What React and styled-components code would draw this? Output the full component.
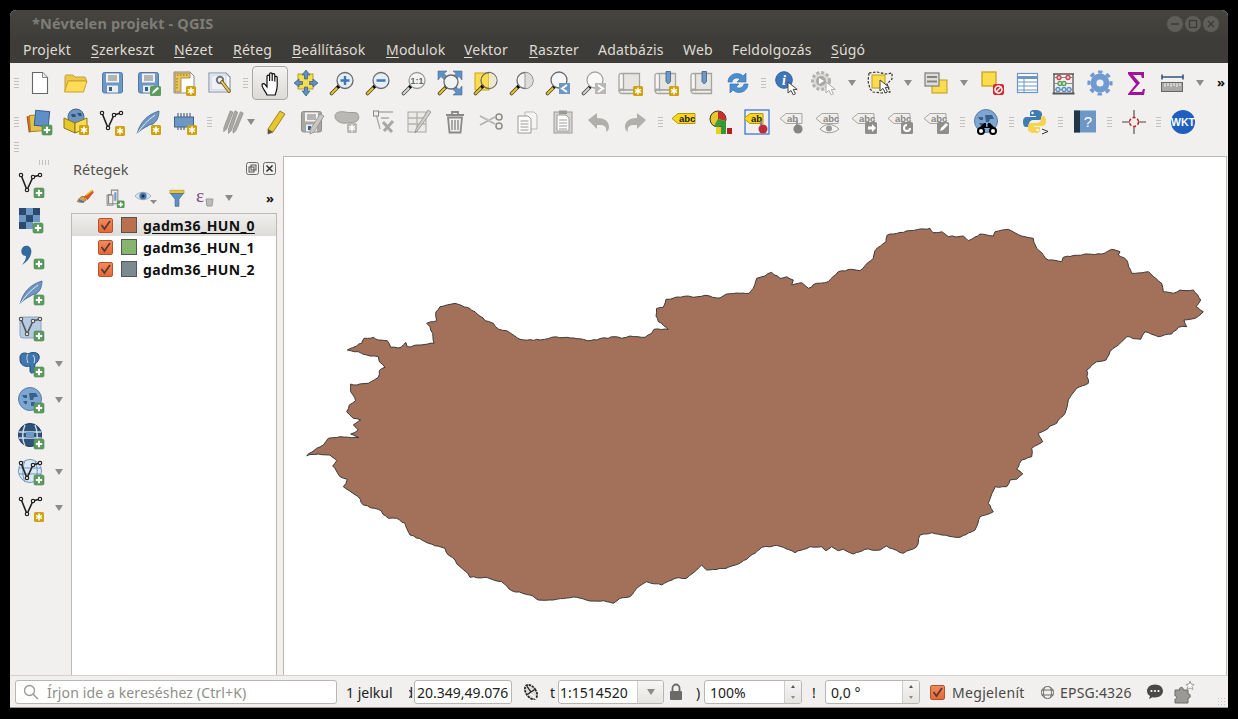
import styled, { createGlobalStyle } from 'styled-components';

const GlobalStyle = createGlobalStyle`
  html, body { margin: 0; padding: 0; background: #000; }
  body { font-family: "Noto Sans", "Open Sans", sans-serif; overflow: hidden; }
`;

const Desktop = styled.div`
  width: 1238px;
  height: 719px;
  padding: 10px 10px 11px;
  box-sizing: border-box;
  background: #000;
`;

const Window = styled.div`
  display: flex;
  flex-direction: column;
  height: 100%;
  background: #f1f0ee;
  border-radius: 6px 6px 0 0;
  overflow: hidden;
`;

const TitleBar = styled.div`
  display: flex;
  align-items: center;
  height: 27px;
  box-sizing: border-box;
  padding: 1px 10px 0 22px;
  background: linear-gradient(#45443f, #3f3e3a);
  color: #7f7d77;
  font-size: 14.5px;
  font-weight: 700;
`;

const TitleText = styled.div`
  flex: 1;
  margin-top: -3px;
  letter-spacing: 0.15px;
`;

const WinButtons = styled.div`
  display: flex;
  gap: 2px;
  margin-right: -1px;
`;

const WinButton = styled.div`
  width: 16px;
  height: 16px;
  border-radius: 50%;
  background: #5f5e59;
  display: flex;
  align-items: center;
  justify-content: center;
`;

const MenuBar = styled.div`
  display: flex;
  align-items: center;
  height: 26px;
  box-sizing: border-box;
  padding: 0 0 1px 13px;
  background: #3d3c38;
  color: #dfdbd2;
  font-size: 14px;
  letter-spacing: 0.2px;
`;

const MenuItem = styled.div`
  width: ${(p) => p.$w}px;
  flex: none;
  white-space: nowrap;
  u { text-underline-offset: 2px; }
`;

const Toolbars = styled.div`
  height: 92px;
  box-sizing: border-box;
  flex: none;
`;

const Toolbar = styled.div`
  display: flex;
  align-items: center;
  height: ${(p) => p.$h}px;
`;

const GripBox = styled.div`
  width: ${(p) => p.$w || 14}px;
  flex: none;
  display: flex;
  flex-direction: column;
  align-items: center;
  gap: 2px;
`;

const GripLine = styled.i`
  display: block;
  width: 5px;
  height: 1px;
  background: #c4c2bd;
`;

const Tool = styled.div`
  width: ${(p) => p.$w || 36}px;
  height: 34px;
  flex: none;
  box-sizing: border-box;
  display: flex;
  align-items: center;
  justify-content: ${(p) => (p.$w ? 'flex-start' : 'center')};
  padding-left: ${(p) => (p.$w ? 4 : 0)}px;
  border: 1px solid ${(p) => (p.$active ? '#a9a7a1' : 'transparent')};
  border-radius: 4px;
  background: ${(p) => (p.$active ? 'linear-gradient(#f3f2f1, #dcdad6)' : 'transparent')};
`;

const Drop = styled.div`
  width: 20px;
  flex: none;
  display: flex;
  justify-content: center;
`;

const Arrow = styled.i`
  display: block;
  width: 0;
  height: 0;
  border-left: 4.5px solid transparent;
  border-right: 4.5px solid transparent;
  border-top: 6px solid #8c8b87;
`;

const More = styled.div`
  flex: none;
  width: 22px;
  text-align: center;
  color: #111;
  font-size: 13px;
  font-weight: 700;
  line-height: 1;
`;

const Main = styled.div`
  flex: 1;
  min-height: 0;
  display: flex;
`;

const Dock = styled.div`
  width: 61px;
  flex: none;
  box-sizing: border-box;
  padding: 5px 0 0 3px;
`;

const DockGrip = styled.div`
  display: flex;
  justify-content: center;
  gap: 2px;
  height: 6px;
  margin-left: 13px;
  width: 36px;
`;

const DockDot = styled.i`
  display: block;
  width: 1px;
  height: 5px;
  background: #c4c2bd;
`;

const DockRow = styled.div`
  display: flex;
  align-items: center;
  height: 36px;
`;

const Panel = styled.div`
  width: 212px;
  flex: none;
  display: flex;
  flex-direction: column;
`;

const PanelHead = styled.div`
  display: flex;
  align-items: center;
  height: 28px;
  box-sizing: border-box;
  padding: 0 3px 1px 2px;
  color: #55534f;
  font-size: 14.5px;
`;

const PanelTitle = styled.div`
  flex: 1;
`;

const PanelBtns = styled.div`
  display: flex;
  gap: 4px;
  margin-right: 4px;
`;

const PanelTools = styled.div`
  display: flex;
  align-items: center;
  height: 30px;
  padding-left: 1px;
`;

const PanelTool = styled.div`
  width: ${(p) => p.$w}px;
  flex: none;
  display: flex;
  align-items: center;
  justify-content: center;
`;

const Tree = styled.div`
  flex: 1;
  width: 206px;
  box-sizing: border-box;
  background: #fff;
  border: 1px solid #bcbab5;
  border-bottom: 0;
`;

const LayerRow = styled.div`
  display: flex;
  align-items: center;
  height: 22px;
  padding-left: 26px;
  background: ${(p) => (p.$selected ? 'linear-gradient(#f0efed, #dedcd9)' : '#fff')};
  color: #111;
  font-size: 14px;
  font-weight: 700;
  text-decoration: ${(p) => (p.$selected ? 'underline' : 'none')};
  text-underline-offset: 2px;
`;

const Check = styled.div`
  width: 15px;
  height: 15px;
  flex: none;
  box-sizing: border-box;
  border: 1px solid #b4532a;
  border-radius: 2px;
  background: linear-gradient(#f28a5c, #e5683a);
  display: flex;
  align-items: center;
  justify-content: center;
`;

const Swatch = styled.div`
  width: 16px;
  height: 16px;
  flex: none;
  box-sizing: border-box;
  margin: 0 6px 0 8px;
  background: ${(p) => p.$color};
  border: 1px solid #555;
`;

const LayerName = styled.span`
  letter-spacing: 0.33px;
`;

const Canvas = styled.div`
  flex: 1;
  min-width: 0;
  box-sizing: border-box;
  margin: 1px 1px 0 0;
  background: #fff;
  border: 1px solid #bcbab5;
  border-bottom: 0;
`;

const MapSvg = styled.svg`
  display: block;
  width: 100%;
  height: 100%;
`;

const StatusBar = styled.div`
  height: 33px;
  flex: none;
  box-sizing: border-box;
  display: flex;
  align-items: center;
  padding: 1px 0 0 5px;
  border-top: 1px solid #d4d2cd;
  border-bottom: 1px solid #9d9b97;
  color: #333;
  font-size: 14px;
`;

const Search = styled.div`
  width: 322px;
  height: 24px;
  flex: none;
  box-sizing: border-box;
  display: flex;
  align-items: center;
  gap: 8px;
  padding-left: 7px;
  background: #fff;
  border: 1px solid #b8b6b1;
  border-radius: 3px;
  color: #8f8e8a;
  letter-spacing: 0.13px;
`;

const Clip = styled.div`
  width: ${(p) => p.$w}px;
  margin-left: ${(p) => p.$ml || 0}px;
  flex: none;
  display: flex;
  justify-content: ${(p) => (p.$end ? 'flex-end' : 'flex-start')};
  overflow: hidden;
  white-space: nowrap;
  color: #222;
`;

const Field = styled.div`
  width: ${(p) => p.$w}px;
  margin-left: ${(p) => p.$ml || 0}px;
  height: 24px;
  flex: none;
  box-sizing: border-box;
  display: flex;
  align-items: center;
  background: #fff;
  border: 1px solid #b8b6b1;
  border-radius: 3px;
  color: #222;
  overflow: hidden;
`;

const FieldText = styled.div`
  flex: 1;
  padding-left: ${(p) => p.$pad ?? 4}px;
  white-space: nowrap;
  overflow: hidden;
`;

const ComboButton = styled.div`
  width: 25px;
  height: 100%;
  flex: none;
  display: flex;
  align-items: center;
  justify-content: center;
  border-left: 1px solid #cfcdc9;
  background: linear-gradient(#f7f6f5, #e6e4e1);
`;

const Spin = styled.div`
  width: 16px;
  height: 100%;
  flex: none;
  display: flex;
  flex-direction: column;
  align-items: center;
  justify-content: space-around;
  border-left: 1px solid #cfcdc9;
  background: linear-gradient(#f7f6f5, #e6e4e1);
`;

const SpinUp = styled.i`
  width: 0;
  height: 0;
  border-left: 2.5px solid transparent;
  border-right: 2.5px solid transparent;
  border-bottom: 3px solid #555;
`;

const SpinDown = styled(SpinUp)`
  border-bottom: 0;
  border-top: 3px solid #8c8b87;
`;

const StatusIcon = styled.div`
  flex: none;
  display: flex;
  margin-left: ${(p) => p.$ml || 0}px;
`;

const RenderLabel = styled.div`
  margin-left: 7px;
  width: 88px;
  flex: none;
  color: #4a4946;
  white-space: nowrap;
  letter-spacing: 0.32px;
`;

const Epsg = styled.div`
  width: 92px;
  margin-left: 5px;
  flex: none;
  color: #4a4946;
  white-space: nowrap;
  letter-spacing: 0.2px;
`;

const Resize = styled.div`
  margin-left: auto;
  margin-right: 1px;
  align-self: flex-end;
  width: 10px;
  height: 10px;
  background-image: radial-gradient(#c8c6c1 1px, transparent 1px);
  background-size: 3px 3px;
`;

// icon helpers, all drawn on a 28x28 grid
const Ico = ({ s = 28, children }) => (
  <svg width={s} height={s} viewBox="0 0 28 28" style={{ display: 'block' }}>
    {children}
  </svg>
);

const StarBadge = ({ x = 17, y = 17, grey }) => (
  <g transform={`translate(${x} ${y})`}>
    <rect width="10" height="10" rx="1.5" fill={grey ? '#b9b8b5' : '#cfa308'} />
    <path d="M5 1.6v6.8M2 3.3l6 3.4M2 6.7l6-3.4" stroke="#fff" strokeWidth="1.5" />
  </g>
);

const PlusBadge = ({ x = 17, y = 17 }) => (
  <g transform={`translate(${x} ${y})`}>
    <rect width="10" height="10" rx="1.5" fill="#5c9b5e" stroke="#4a8a50" strokeWidth=".6" />
    <path d="M5 1.8v6.4M1.8 5h6.4" stroke="#fff" strokeWidth="2.1" />
  </g>
);

const Cursor = ({ x = 14, y = 12, grey }) => (
  <path
    transform={`translate(${x} ${y})`}
    d="M0 0v11l3-2.6 2.2 4.4 2.2-1-2.2-4.4h4z"
    fill="#fff"
    stroke={grey ? '#aaa' : '#444'}
    strokeWidth="1"
  />
);

const VShape = ({ stroke = '#222', dx = 0, dy = 0 }) => (
  <g transform={`translate(${dx} ${dy})`} fill="#fff" stroke={stroke} strokeWidth="1.2">
    <path d="M4 5l6 15 6-13 7-2" fill="none" strokeWidth="1.6" />
    <circle cx="4" cy="5" r="1.7" />
    <circle cx="10" cy="20" r="1.7" />
    <circle cx="16" cy="7" r="1.7" />
    <circle cx="23" cy="5" r="1.7" />
  </g>
);

const Feather = () => (
  <g>
    <path d="M3 26C6 15 12 7 25 3c0 7-3 11-6 13l-4 1c-2 2-7 3-12 9z" fill="#6f96c2" stroke="#3f658f" strokeWidth=".8" />
    <path d="M3 26C8 18 14 12 21 7" stroke="#dfe9f3" strokeWidth="1" fill="none" />
  </g>
);

const Floppy = ({ fill = '#6d97c4', line = '#4f7aa8' }) => (
  <g>
    <rect x="4.5" y="3.5" width="20" height="20.5" rx="2" fill={fill} stroke={line} />
    <rect x="8" y="4.5" width="13" height="9" fill="#f2f2f0" />
    <path d="M10 7h9M10 9h9M10 11h9" stroke="#777" strokeWidth="1" />
    <rect x="9" y="16.5" width="11" height="7" fill="#e9eef3" />
    <rect x="11" y="18" width="3" height="4" fill="#3a5f87" />
  </g>
);

const Lens = ({ cx = 17, cy = 11.5, r = 8, fill = '#eef1f4', stroke = '#6a6a6a', handle = '#e5c21a', children }) => (
  <g>
    <path d="M10.5 17.5l-7 7" stroke="#444" strokeWidth="3.6" strokeLinecap="round" />
    <path d="M8.6 19.4l-5 5" stroke={handle} strokeWidth="2.1" strokeLinecap="round" />
    <path d="M11.500 16.500l-2 2" stroke="#000" strokeWidth="3" />
    <circle cx={cx} cy={cy} r={r} fill={fill} stroke={stroke} strokeWidth="1.3" />
    {children}
  </g>
);

const Scroll = () => (
  <g stroke="#a5a4a0" strokeWidth="1.3">
    <path d="M7 4.500h16.500V21H7z" fill="#e6e5e2" />
    <path d="M3 21.500c0 2 1.500 3 3.500 3h17V21H7z" fill="#efeeec" />
    <path d="M3 21.500V6.500c0-2.800 4.500-2.800 4.500 0V21c-1-1.500-4-1-4.500.5z" fill="#f6f5f3" />
  </g>
);

const Mark = () => <path d="M14 2.500h4.500v10l-2.250 2.500-2.250-2.500z" fill="#6d97c4" stroke="#3a5f87" strokeWidth=".8" />;

const Tag = ({ grey, text = 'abc', dx = 0, w = 22 }) => (
  <g transform={`translate(${dx} 0)`}>
    <path
      d={`M1 10.5l6-5h${w - 6}v10H7z`}
      fill={grey ? '#efeeec' : '#f7d716'}
      stroke={grey ? '#a8a7a4' : '#b6960a'}
    />
    <text x={8} y={14} fontFamily="Liberation Sans, sans-serif" fontSize="9.5" fontWeight="700" fill={grey ? '#8a8986' : '#222'}>
      {text}
    </text>
  </g>
);

const Pencil = ({ fill = '#e9c62e', line = '#8f7a1c' }) => (
  <g>
    <path d="M19 3l5 3-12 18-5 2 0-5z" fill={fill} stroke={line} strokeWidth=".9" />
    <path d="M7 21l5 3-5 2z" fill="#555" />
  </g>
);

const Globe = ({ fill = '#7fa6d0', dark = '#38608c' }) => (
  <g>
    <circle cx="13" cy="13" r="11.5" fill={fill} stroke="#5a7fa8" />
    <path d="M5 9h5v3H7zM12 7h7l2 4h-4l-1 3h-3zM6 15h4v3H8zM14 16h4l-1 4h-3z" fill={dark} />
  </g>
);

// toolbar icons
const NewIcon = () => <Ico><path d="M6.5 3.5h10l5 5v16h-15z" fill="#fff" stroke="#666" strokeWidth="1.1" /><path d="M16.5 3.5v5h5" fill="#eee" stroke="#888" /></Ico>;
const OpenIcon = () => (
  <Ico>
    <path d="M3 7.5C3 6 4 6 5 6h6l2 2h9c1 0 2 .5 2 2v2H6l-3 10z" fill="#eec64c" stroke="#c7a232" />
    <path d="M6 12h19l-3.5 11H2.5z" fill="#fedc55" stroke="#c7a232" />
  </Ico>
);
const SaveIcon = () => <Ico><Floppy /></Ico>;
const SaveAsIcon = () => (
  <Ico>
    <Floppy />
    <rect x="16" y="17" width="11" height="10" rx="1.5" fill="#5c9b5e" />
    <path d="M18 25l1-3 4.5-4 1.5 1.5-4.5 4z" fill="#fff" />
  </Ico>
);
const LayoutNewIcon = () => (
  <Ico>
    <path d="M4 3h16l4 4v17H4z" fill="#fff" stroke="#888" />
    <path d="M5 4h15v5h-9v14H5z" fill="#e9c45e" stroke="#9c7f2a" strokeWidth=".8" />
    <path d="M7 6h11M7 9v11" stroke="#87691d" strokeWidth="1" strokeDasharray="1.5 1.5" />
    <StarBadge x={16} y={17} />
  </Ico>
);
const LayoutMgrIcon = () => (
  <Ico>
    <path d="M3 4h17l4 4v15H3z" fill="#fff" stroke="#7f8ea8" strokeWidth="1.1" />
    <rect x="5" y="6" width="15" height="15" fill="#eef1f8" stroke="#c4cbdd" />
    <circle cx="14" cy="11" r="3.2" fill="none" stroke="#777" strokeWidth="2" />
    <path d="M16 13l7 9" stroke="#6d5a20" strokeWidth="3.6" strokeLinecap="round" />
    <path d="M16 13l7 9" stroke="#e8c85a" strokeWidth="2" strokeLinecap="round" />
  </Ico>
);
const HandIcon = () => (
  <Ico>
    <path d="M11 26c-1-3-5-7-5-10 0-1.6 2-1.8 3-.6l2 2.6V7.5c0-1.8 2.6-1.8 2.6 0V12 5.2c0-1.8 2.6-1.8 2.6 0V12 6c0-1.8 2.6-1.8 2.6 0v6.5-4c0-1.6 2.4-1.6 2.4 0V17c0 3-1 5-2 9z" fill="#fff" stroke="#111" strokeWidth="1.2" />
  </Ico>
);
const PanSelIcon = () => (
  <Ico>
    <rect x="6" y="5" width="15" height="15" fill="#fbdc4e" stroke="#b99c1e" />
    <g fill="#5f90c2" stroke="#2f5c8c" strokeWidth=".7">
      <path d="M14 1l4 5h-2.5v4h-3V6H10z" />
      <path d="M14 27l4-5h-2.5v-4h-3v4H10z" />
      <path d="M2 14l5-4v2.5h3.5v3H7V18z" />
      <path d="M26 14l-5-4v2.5h-3.5v3H21V18z" />
    </g>
  </Ico>
);
const ZoomInIcon = () => <Ico><Lens fill="#e5edf5"><path d="M17 7v9M12.5 11.5h9" stroke="#3f76b8" strokeWidth="2.4" /></Lens></Ico>;
const ZoomOutIcon = () => <Ico><Lens fill="#e5edf5"><path d="M12.5 11.5h9" stroke="#3f76b8" strokeWidth="2.4" /></Lens></Ico>;
const ZoomOneIcon = () => (
  <Ico>
    <Lens fill="#f4f4f2" stroke="#9a9a98" handle="#d8d6d0">
      <text x="17" y="15" textAnchor="middle" fontFamily="Liberation Sans, sans-serif" fontSize="9" fontWeight="700" fill="#666">1:1</text>
    </Lens>
  </Ico>
);
const ZoomFullIcon = () => (
  <Ico>
    <g fill="#5f90c2" stroke="#44709f" strokeWidth=".6">
      <path d="M2 2h9l-3 2.5 3 3-3 3-3-3L2 11z" />
      <path d="M26 2h-9l3 2.5-3 3 3 3 3-3 3 3.5z" />
      <path d="M26 26h-9l3-2.5-3-3 3-3 3 3 3-3.5z" />
    </g>
    <Lens cx={15} cy={13} r={7} fill="#f1f2f2" />
  </Ico>
);
const ZoomSelIcon = () => (
  <Ico>
    <rect x="3" y="4" width="14" height="17" fill="#fbdc4e" stroke="#c7a81e" />
    <Lens fill="none">
      <path d="M17 4a7.5 7.5 0 0 1 0 15z" fill="#ece9cf" />
    </Lens>
  </Ico>
);
const ZoomLayerIcon = () => (
  <Ico>
    <Lens fill="#f3f3f1">
      <path d="M17 3.5a8 8 0 0 1 0 16z" fill="#dcdcda" />
      <path d="M17 3.5v16" stroke="#9a9a98" />
    </Lens>
  </Ico>
);
const ZoomLastIcon = () => (
  <Ico>
    <Lens cx={15} cy={11} fill="#f4f6f8" />
    <rect x="15" y="14" width="11" height="11" fill="#6d97c4" />
    <path d="M23 16l-5 3.5 5 3.5" fill="none" stroke="#fff" strokeWidth="2" />
  </Ico>
);
const ZoomNextIcon = () => (
  <Ico>
    <Lens cx={15} cy={11} fill="#f8f8f7" stroke="#a5a5a3" handle="#d0cfca" />
    <rect x="15" y="14" width="11" height="11" fill="#b7b7b5" />
    <path d="M18 16l5 3.5-5 3.5" fill="none" stroke="#fff" strokeWidth="2" />
  </Ico>
);
const SheetNewIcon = () => <Ico><Scroll /><StarBadge /></Ico>;
const SheetMarkIcon = () => <Ico><Scroll /><Mark /><StarBadge /></Ico>;
const SheetShowIcon = () => <Ico><Scroll /><Mark /></Ico>;
const RefreshIcon = () => (
  <Ico>
    <g fill="#4a90d0" stroke="#2f6aa8" strokeWidth=".6">
      <path d="M4 13C4 7 10 3 16 5c1 .3 2 1 3 2l3-3v9h-9l3-3c-3-2-7-1-8 3z" />
      <path d="M24 15c0 6-6 10-12 8-1-.3-2-1-3-2l-3 3v-9h9l-3 3c3 2 7 1 8-3z" />
    </g>
  </Ico>
);
const IdentifyIcon = () => (
  <Ico>
    <circle cx="10" cy="11" r="8.3" fill="#3f76b8" stroke="#2f5f9c" />
    <text x="10" y="16" textAnchor="middle" fontFamily="Liberation Serif, serif" fontSize="14" fontWeight="700" fontStyle="italic" fill="#fff">i</text>
    <Cursor x={14} y={13} />
  </Ico>
);
const ActionIcon = () => (
  <Ico>
    <circle cx="11" cy="12" r="8.5" fill="#dcdbd8" stroke="#b2b1ae" strokeWidth="3" strokeDasharray="3 2" />
    <circle cx="11" cy="12" r="5" fill="#aaa9a6" />
    <path d="M9 9v6l5-3z" fill="#fff" />
    <Cursor x={16} y={13} grey />
  </Ico>
);
const SelectIcon = () => (
  <Ico>
    <rect x="6" y="6" width="13" height="13" fill="#fbdc4e" stroke="#b99c1e" />
    <path d="M3 4l8-1 9 2 6-1 0 6-5 5 3 8-8 1-9-1-3-3-2-8z" fill="none" stroke="#333" strokeWidth="1.2" strokeDasharray="2.5 1.5" />
    <Cursor x={14} y={11} />
  </Ico>
);
const AttrSelIcon = () => (
  <Ico>
    <rect x="10" y="11" width="15" height="13" fill="#fbdc4e" stroke="#b99c1e" />
    <rect x="3" y="4" width="14" height="13" fill="#dedddb" stroke="#85847f" strokeWidth="1.3" />
    <path d="M5 8h10M5 12.5h10" stroke="#85847f" strokeWidth="1.8" />
  </Ico>
);
const DeselectIcon = () => (
  <Ico>
    <rect x="4" y="3" width="14" height="14" fill="#fbdc4e" stroke="#c2a520" strokeWidth="1.3" />
    <rect x="15" y="15" width="11" height="11" rx="2" fill="#d8262c" />
    <circle cx="20.5" cy="20.5" r="3.5" fill="none" stroke="#fff" strokeWidth="1.5" />
    <path d="M18 23l5-5" stroke="#fff" strokeWidth="1.5" />
  </Ico>
);
const TableIcon = () => (
  <Ico>
    <rect x="3.5" y="4.5" width="20" height="19" fill="#fff" stroke="#6d97c4" strokeWidth="1.2" />
    <path d="M4 8.5h19" stroke="#6d97c4" strokeWidth="3" />
    <path d="M10 9v14M4 13h19M4 17h19M4 21h19" stroke="#6d97c4" strokeWidth="1" />
  </Ico>
);
const AbacusIcon = () => (
  <Ico>
    <path d="M4 5v19M23 5v19M3 5h21" stroke="#555" strokeWidth="1.3" fill="none" />
    <path d="M2.5 24.5h22" stroke="#555" strokeWidth="2" />
    <path d="M4 8.5h19M4 14.5h19M4 20.5h19" stroke="#888" />
    <g fill="none" strokeWidth="1.3">
      <circle cx="9" cy="8.5" r="2" stroke="#c9434b" fill="#f3c9cb" /><circle cx="18" cy="8.5" r="2" stroke="#c9434b" fill="#f3c9cb" />
      <circle cx="10" cy="14.5" r="2" stroke="#5aa15a" fill="#cfe6cf" /><circle cx="14" cy="14.5" r="2" stroke="#5aa15a" fill="#cfe6cf" />
      <circle cx="8" cy="20.5" r="2" stroke="#5f90c2" fill="#cfe0f1" /><circle cx="14" cy="20.5" r="2" stroke="#5f90c2" fill="#cfe0f1" /><circle cx="19" cy="20.5" r="2" stroke="#5f90c2" fill="#cfe0f1" />
    </g>
  </Ico>
);
const GearIcon = () => (
  <Ico>
    <circle cx="14" cy="14" r="9.5" fill="#6f9bd0" />
    <circle cx="14" cy="14" r="11" fill="none" stroke="#6f9bd0" strokeWidth="3.2" strokeDasharray="4.4 4.2" strokeDashoffset="2" />
    <circle cx="14" cy="14" r="3.6" fill="#f1f0ee" />
  </Ico>
);
const SigmaIcon = () => <Ico><path d="M6 3h16v6h-2l-1-3H11l7 8-8 9h10l1-3h2l-1 6H6v-1l8-10-8-10z" fill="#a0149c" /></Ico>;
const RulerIcon = () => (
  <Ico>
    <path d="M4 8h21M4 5.5v5M25 5.5v5" stroke="#35557a" strokeWidth="1.6" />
    <rect x="3.5" y="13.5" width="21" height="9" fill="#a9a8a5" stroke="#666" />
    <path d="M7 14v4M10 14v3M13 14v4M16 14v3M19 14v4M22 14v3" stroke="#fff" strokeWidth=".9" />
  </Ico>
);
const AddLayersIcon = () => (
  <Ico>
    <rect x="2" y="8" width="14" height="15" transform="rotate(-8 9 15)" fill="#d96c33" stroke="#a64c1f" />
    <rect x="4" y="7" width="15" height="16" transform="rotate(-4 11 15)" fill="#e8c24a" stroke="#ab8c21" />
    <rect x="9" y="3" width="14" height="15" transform="rotate(6 16 10)" fill="#5f8fc7" stroke="#365f90" />
    <PlusBadge x={16} y={17} />
  </Ico>
);
const GeoPackageIcon = () => (
  <Ico>
    <circle cx="14" cy="9" r="8" fill="#6f96c2" stroke="#44688f" />
    <path d="M9 6h4l1 3h-4zM15 5h4l1 3h-3z" fill="#2f527a" />
    <path d="M2 10l11 5v10L2 20z" fill="#e8c72a" stroke="#8b7614" />
    <path d="M13 15l12-5v10l-12 5z" fill="#f5dd55" stroke="#8b7614" />
    <StarBadge x={17} y={17} />
  </Ico>
);
const NewVIcon = () => <Ico><VShape /><StarBadge x={17} y={18} /></Ico>;
const NewVPlusIcon = () => <Ico><VShape /><PlusBadge x={17} y={18} /></Ico>;
const NewFeatherIcon = () => <Ico><Feather /><StarBadge x={17} y={17} /></Ico>;
const ChipIcon = () => (
  <Ico>
    <path d="M8 5v4M11 5v4M14 5v4M17 5v4M20 5v4M8 19v3M11 19v3M14 19v3" stroke="#33465e" />
    <rect x="4.5" y="9" width="19" height="10" fill="#6d97c4" stroke="#3f658f" />
    <StarBadge x={17} y={17} />
  </Ico>
);
const EditMultiIcon = () => (
  <svg width="26" height="28" viewBox="0 0 28 28" style={{ display: 'block' }}>
    <g fill="#a9a8a5" stroke="#8f8e8b" strokeWidth=".8">
      <path d="M10 2l3 1.5-7 18-3 3 0-4z" />
      <path d="M15 2l3 1.5-7 20-3 3 0-5z" />
      <path d="M21 3l3 1.5-8 19-3 2.5 0-4z" />
    </g>
  </svg>
);
const PencilIcon = () => <Ico><Pencil /></Ico>;
const SaveEditsIcon = () => (
  <Ico>
    <Floppy fill="#a8a7a4" line="#8d8c89" />
    <path d="M27 8L17 24l-4 2 0-4L23 6z" fill="#c8c7c4" stroke="#8f8e8b" strokeWidth=".8" />
  </Ico>
);
const ShapeGearIcon = () => (
  <Ico>
    <path d="M2 8c0-4 6-5 10-4 4 1 8 0 12 1 3 3 2 8-2 9-4 1-7 1-9 1-5 1-11-2-11-7z" fill="#b9b8b5" stroke="#9c9b98" />
    <StarBadge x={14} y={15} grey />
  </Ico>
);
const NodeToolIcon = () => (
  <Ico>
    <path d="M7 6l4 15M10 4h14M12 10h8" stroke="#aaa" strokeWidth="1.3" fill="none" />
    <rect x="4.5" y="3" width="5" height="5" fill="#eee" stroke="#888" />
    <path d="M14 14l9 10M24 13l-9 10" stroke="#a8a7a4" strokeWidth="3" />
  </Ico>
);
const TableEditIcon = () => (
  <Ico>
    <rect x="3" y="4" width="18" height="20" fill="#eceae7" stroke="#a8a7a4" />
    <path d="M3 10h18M3 16h18M12 4v20" stroke="#b5b4b1" strokeWidth="1.4" />
    <path d="M26 4L13 22l-3 3 1-4L23 2z" fill="#cfcec9" stroke="#8f8e8b" strokeWidth=".8" />
  </Ico>
);
const TrashIcon = () => (
  <Ico>
    <path d="M5 7h18M11 6V4h6v2" stroke="#8a8987" strokeWidth="1.8" fill="none" />
    <path d="M7 9.5h14l-1.5 15h-11z" fill="none" stroke="#8a8987" strokeWidth="1.8" />
    <path d="M11 12v10M14 12v10M17 12v10" stroke="#8a8987" strokeWidth="1.4" />
  </Ico>
);
const ScissorsIcon = () => (
  <Ico>
    <path d="M3 8l15 8M3 17L18 9" stroke="#b3b2af" strokeWidth="1.6" />
    <path d="M2 7l12 5 0 2z" fill="#c7c6c3" />
    <circle cx="22" cy="9" r="3" fill="none" stroke="#8f8e8b" strokeWidth="1.6" />
    <circle cx="22" cy="18" r="3" fill="none" stroke="#8f8e8b" strokeWidth="1.6" />
  </Ico>
);
const CopyIcon = () => (
  <Ico>
    <path d="M12 4h9l3 3v14H12z" fill="#f5f4f3" stroke="#b8b7b4" />
    <path d="M5 8h10l3 3v14H5z" fill="#fbfbfa" stroke="#9b9a97" />
    <path d="M7.5 13h8M7.5 16h8M7.5 19h8M7.5 22h8" stroke="#9b9a97" />
  </Ico>
);
const PasteIcon = () => (
  <Ico>
    <rect x="5" y="4" width="18" height="21" fill="#d6d5d2" stroke="#9b9a97" />
    <path d="M8 7h9l3 3v13H8z" fill="#fff" stroke="#9b9a97" />
    <rect x="10" y="2.5" width="8" height="3.5" fill="#9b9a97" />
    <path d="M10 12h8M10 15h8M10 18h8M10 21h8" stroke="#9b9a97" />
  </Ico>
);
const UndoIcon = () => <Ico><path d="M3 12l9-7v5c7 0 12 3 12 9 0 2-1 4-3 5 1-4-1-7-5-7h-4v4z" fill="#b0afac" /></Ico>;
const RedoIcon = () => <Ico><path d="M25 12l-9-7v5C9 10 4 13 4 19c0 2 1 4 3 5-1-4 1-7 5-7h4v4z" fill="#b0afac" /></Ico>;
const AbcIcon = () => <Ico><Tag w={23} /></Ico>;
const DiagramIcon = () => (
  <Ico>
    <circle cx="11" cy="11" r="8" fill="#e8c72a" stroke="#333" />
    <path d="M11 11V3a8 8 0 0 1 7.5 10z" fill="#cc2c2c" />
    <path d="M11 11l7.5 2A8 8 0 0 1 7 18z" fill="#3f9a3f" />
    <rect x="9" y="19" width="5" height="7" fill="#f0cb22" />
    <rect x="14" y="13" width="5" height="13" fill="#2d9a3a" />
    <rect x="20" y="20" width="5" height="6" fill="#b51f1f" />
  </Ico>
);
const PinIcon = () => (
  <Ico>
    <rect x="2" y="2" width="24" height="24" fill="none" stroke="#2b6fd6" strokeWidth="1.2" />
    <Tag text="ab" w={19} />
    <path d="M18 13v4" stroke="#888" strokeWidth="2" />
    <circle cx="20" cy="21" r="4.5" fill="#c02a3a" />
  </Ico>
);
const GreyTagIcon = ({ text = 'abc', children }) => <Ico><Tag grey text={text} w={22} />{children}</Ico>;
const BallTag = () => (
  <GreyTagIcon text="ab">
    <path d="M18 12v5" stroke="#999" strokeWidth="2" />
    <circle cx="19" cy="21" r="4.6" fill="#868583" />
  </GreyTagIcon>
);
const EyeTag = () => (
  <GreyTagIcon>
    <path d="M5 21c5-6 13-6 19 0-6 5-14 5-19 0z" fill="#f4f3f1" stroke="#9c9b98" />
    <circle cx="14" cy="20.5" r="3" fill="#9c9b98" />
  </GreyTagIcon>
);
const BoxTag = ({ d, round }) => (
  <GreyTagIcon>
    <rect x="14" y="14" width="12" height="12" rx="1.5" fill="#8f8e8b" />
    {round ? <path d="M23 20a3 3 0 1 1-3-3" fill="none" stroke="#fff" strokeWidth="2" /> : <path d={d} fill="#fff" />}
  </GreyTagIcon>
);
const GlobeFindIcon = () => (
  <Ico>
    <Globe />
    <g fill="#000">
      <path d="M6 20l5-5h2v4h2v-4h2l5 5z" />
    </g>
    <g fill="#fff" stroke="#000" strokeWidth="2">
      <circle cx="8" cy="23" r="3" />
      <circle cx="20" cy="23" r="3" />
    </g>
  </Ico>
);
const PythonIcon = () => (
  <Ico>
    <path d="M13 2C8 2 8 4 8 6v2h6v1H5c-3 0-4 2-4 5s1 5 3 5h3v-3c0-2 2-4 4-4h6c2 0 3-1 3-3V6c0-2-2-4-7-4z" fill="#3f7cb3" />
    <circle cx="10.5" cy="5" r="1.2" fill="#fff" />
    <path d="M13 25c5 0 5-2 5-4v-2h-6v-1h8c3 0 4-2 4-5s-1-5-3-5h-2v3c0 2-2 4-4 4H9c-2 0-3 1-3 3v3c0 2 2 4 7 4z" fill="#f7d34e" />
    <circle cx="15.5" cy="22" r="1.2" fill="#fff" />
    <path d="M20 21l6 2.5-6 2.5" fill="none" stroke="#333" strokeWidth="1" />
  </Ico>
);
const HelpIcon = () => (
  <Ico>
    <rect x="3" y="2.5" width="22" height="22" fill="#6d97c4" />
    <rect x="3" y="2.5" width="6" height="22" fill="#223547" />
    <text x="17" y="19" textAnchor="middle" fontFamily="Liberation Sans, sans-serif" fontSize="15" fill="#fff">?</text>
  </Ico>
);
const CrossIcon = () => (
  <Ico>
    <path d="M14 2v7M14 19v7M2 14h8M18 14h8" stroke="#444" strokeWidth="1.1" />
    <circle cx="14" cy="14" r="4.5" fill="none" stroke="#c4202c" strokeWidth="1.5" strokeDasharray="3 1.8" />
  </Ico>
);
const WktIcon = () => (
  <Ico>
    <circle cx="14" cy="14" r="12" fill="#1e5fbf" />
    <text x="14" y="18" textAnchor="middle" fontFamily="Liberation Sans, sans-serif" fontSize="10.5" fontWeight="700" fill="#fff">WKT</text>
  </Ico>
);

// left dock icons
const RasterIcon = () => (
  <Ico>
    <g fill="#2c4a6e"><rect x="2" y="2" width="7" height="7" /><rect x="16" y="2" width="7" height="7" /><rect x="9" y="9" width="7" height="7" /><rect x="2" y="16" width="7" height="7" /></g>
    <g fill="#6d97c4"><rect x="9" y="2" width="7" height="7" /><rect x="2" y="9" width="7" height="7" /><rect x="16" y="9" width="7" height="7" /><rect x="9" y="16" width="7" height="7" /></g>
    <PlusBadge x={16} y={17} />
  </Ico>
);
const MeshIcon = () => (
  <Ico>
    <path d="M6 5c4-3 10 0 8 7-1 4-4 8-9 11 3-4 4-6 4-9-5 0-6-6-3-9z" fill="#356a9e" />
    <PlusBadge x={17} y={17} />
  </Ico>
);
const FeatherPlusIcon = () => <Ico><Feather /><PlusBadge x={17} y={17} /></Ico>;
const VirtualIcon = () => (
  <Ico>
    <rect x="3" y="3" width="21" height="21" rx="3" fill="#b6cbe2" stroke="#8aa4c2" />
    <VShape stroke="#555" dx={0} dy={0} />
    <PlusBadge x={17} y={17} />
  </Ico>
);
const PostgresIcon = () => (
  <Ico>
    <path d="M3 7c0-4 5-5 8-3 3-2 8-2 10 0 3 3 0 8-3 10l-1 8c-2 2-4 1-4-1v-5c-3 1-8 0-9-3C3 12 3 10 3 7z" fill="#3f76ad" stroke="#204a78" />
    <path d="M11 4c-2 3-1 6 0 9M16 5c2 3 2 5 1 8" stroke="#cfe0ef" fill="none" />
    <PlusBadge x={17} y={17} />
  </Ico>
);
const WmsIcon = () => <Ico><Globe /><PlusBadge x={17} y={17} /></Ico>;
const WcsIcon = () => (
  <Ico>
    <circle cx="13" cy="13" r="11.5" fill="#2f5378" stroke="#1d3a59" />
    <path d="M2 10h22M2 16h22M8 3c-3 7-3 14 0 21M18 3c3 7 3 14 0 21" stroke="#cfdcea" strokeWidth="1.4" fill="none" />
    <rect x="9" y="10" width="8" height="6" fill="#6d97c4" />
    <PlusBadge x={17} y={17} />
  </Ico>
);
const WfsIcon = () => (
  <Ico>
    <circle cx="13" cy="13" r="11.5" fill="#dce8f4" stroke="#6d97c4" />
    <path d="M2 10h22M2 16h22M8 3c-3 7-3 14 0 21M18 3c3 7 3 14 0 21" stroke="#6d97c4" fill="none" />
    <VShape />
    <PlusBadge x={17} y={17} />
  </Ico>
);

// panel icons
const BrushIcon = () => (
  <Ico s={20}>
    <path d="M2 19c2-5 6-8 9-7l3 5c-3 3-8 4-12 2z" fill="#d8a23a" stroke="#7a5a18" />
    <path d="M11 12l12-9 2 3-9 11z" fill="#d9542b" />
    <path d="M4 17l7 3" stroke="#3f76b8" strokeWidth="2.5" />
    <path d="M14 10l9-7" stroke="#e8c72a" strokeWidth="2" />
  </Ico>
);
const LayerGroupIcon = () => (
  <Ico s={20}>
    <path d="M9 3h9v19H5V9h4z" fill="#f1f0ee" stroke="#8a8986" strokeWidth="1.5" />
    <rect x="3" y="10" width="8" height="14" fill="none" stroke="#8a8986" strokeWidth="1.5" />
    <rect x="13" y="6" width="3" height="12" fill="#6d97c4" />
    <PlusBadge x={17} y={18} />
  </Ico>
);
const EyeDropIcon = () => (
  <svg width="24" height="22" viewBox="0 0 24 22" style={{ display: 'block' }}>
    <path d="M1 9c4-5 12-5 16 0-4 5-12 5-16 0z" fill="#d7e3ef" stroke="#9ab4ce" />
    <circle cx="9" cy="9" r="3.600" fill="#4a76a8" />
    <circle cx="9" cy="9" r="1.500" fill="#1c2f47" />
    <path d="M16 13h7l-3.500 4z" fill="#8c8b87" />
  </svg>
);
const FunnelIcon = () => (
  <Ico s={18}>
    <path d="M3 2h22v5H3z" fill="#e8c72a" stroke="#b0951a" />
    <path d="M4 7h20l-7 9v11h-6V16z" fill="#5f90c2" stroke="#3f658f" />
  </Ico>
);
const EpsilonIcon = () => (
  <svg width="24" height="22" viewBox="0 0 24 22" style={{ display: 'block' }}>
    <text x="1" y="15" fontFamily="Liberation Serif, serif" fontSize="19" fill="#7b4b8f">ε</text>
    <path d="M11 12h7l-1 7h-5z" fill="#bdbcb9" stroke="#9c9b98" />
  </svg>
);

const MouseIcon = () => (
  <svg width="20" height="20" viewBox="0 0 20 20" style={{ display: 'block' }}>
    <g transform="rotate(-35 10 10)">
      <ellipse cx="10" cy="10" rx="5" ry="8" fill="#ddd" stroke="#222" strokeWidth="1.700" strokeDasharray="2.500 .8" />
      <path d="M10 3v7M5.500 10h9" stroke="#222" strokeWidth="1.300" />
    </g>
    <path d="M9 12l3 2 3 3" stroke="#fff" strokeWidth="1.500" />
  </svg>
);

const Grip = ({ w }) => (
  <GripBox $w={w}>
    <GripLine /><GripLine /><GripLine /><GripLine />
  </GripBox>
);

const DropArrow = () => (
  <Drop><Arrow /></Drop>
);

const MENU = [
  ['', 'Projekt', 68],
  ['S', 'zerkeszt', 83],
  ['N', 'ézet', 59],
  ['R', 'éteg', 59],
  ['B', 'eállítások', 94],
  ['M', 'odulok', 78],
  ['V', 'ektor', 65],
  ['R', 'aszter', 69],
  ['', 'Adatbázis', 85],
  ['', 'Web', 49],
  ['', 'Feldolgozás', 99],
  ['S', 'úgó', 50],
];

const DOCK = [
  [NewVPlusIcon],
  [RasterIcon],
  [MeshIcon],
  [FeatherPlusIcon],
  [VirtualIcon],
  [PostgresIcon, true],
  [WmsIcon, true],
  [WcsIcon],
  [WfsIcon, true],
  [NewVIcon, true],
];

const LAYERS = [
  ['gadm36_HUN_0', '#b9704f', true],
  ['gadm36_HUN_1', '#86b56e'],
  ['gadm36_HUN_2', '#7b8a90'],
];

const MAP_POINTS = `306.7,455.7 316.7,448.3 323.3,445 328.3,438.3 340,436.7 359,437.7 350.7,434 358.3,430 353.3,425 360.7,420 353.3,418.3 346.7,411.7 349.3,405 355.7,400.7 350.7,391.7 350.7,384 356.7,385 368.3,383.3 378.3,377.3 379.3,370.7 385,367.3 379.3,361.7 378.3,356.7 370,356 358.3,351.7 347.3,350 361.7,343.3 364,338.3 373.3,337.3 378.3,340 387.3,340.7 390.7,347.3 401,347.3 405.7,342.3 407.3,346.7 434,343.3 432.7,333.3 430,326.7 426.7,323.3 436.7,320.7 436,311.7 440,306.7 455,303.3 466.7,307.3 475,311.7 485,320.7 493.3,323.3 498.3,329 506.7,330.7 520,339.3 540,340 551.7,337.3 566.7,337.3 590,340.7 615,336.7 621.7,338.3 630,336 645,337.3 651.7,333.3 654,329.3 668.3,329.3 658.3,321.7 656,316 656.5,308.5 663.3,307.3 666,299.3 688.3,296 693.3,297.3 705,295.3 720,298 726.7,294 740,293.3 749.3,293.3 753.3,288.3 756.7,278.3 765,276 771.7,272.3 780,278.3 786.7,276.7 793.3,280 791.7,285 801.7,282.7 808.3,288.3 816.7,283.3 828.3,281.7 838.3,271.7 851.7,269.3 860,270.7 873.3,258.3 875,250.7 886,241.7 887.3,235 893.3,234 900,232.5 910,230.7 930,228.3 933,232.7 941.7,231.7 948.3,236.7 963.3,236 968.3,240.7 980,234 993.3,236 995,231.7 1008.3,229.3 1021.7,236 1033.3,238.3 1036.7,248.3 1048.3,260 1061.7,261.7 1063.3,257.3 1088.3,254 1101.7,254 1111.7,249.3 1120,251.7 1118.3,255 1126.7,260 1131.7,273.3 1148.3,271.7 1161.7,283.3 1163.3,291.7 1173.3,293.3 1180,290 1193.3,290 1200.7,300 1196,306.7 1203.3,311.7 1195,318.3 1184,320 1186.7,326.7 1178.3,327.3 1171.7,334 1158.3,336.7 1145,331.7 1140.7,339.3 1126.7,336.7 1118.3,345 1110,351.7 1106,360 1096.7,361.7 1086.7,370 1088.3,383.3 1076.7,388.3 1068.3,400 1065,413.3 1056.7,423.3 1038.3,433.3 1042.7,441.7 1031.7,448.3 1031.7,456.7 1021.7,460 1016.7,469.3 1022.7,474 1016.7,479.3 1010,480 1006.7,486.7 995,486.7 988.3,503.3 993.3,511.7 980,516.7 975,530 960,537.3 941.7,535 931.7,532.7 920,535 916.7,546.7 910,550 903.3,553.3 886.7,546 880,550 865,549.3 853.3,554 843.3,549.3 838.3,550.7 831.7,546.7 826,550.7 821.7,546.7 810,546.7 795,552.7 783.3,547.3 776.7,545.3 761.7,547.3 755,553.3 738.3,564 726,568.3 706.7,570 701.7,565 696.7,570 686.7,578.3 675,578.3 661.7,585 646.7,581.7 636.7,588.3 630,596.7 620,598.3 613.3,603.3 603.3,600.7 590,601 576.7,597.3 556.7,599.3 538.3,600 530,595 511.7,590.7 501.7,581.7 485,577.3 470,577.3 466,571.7 460,566.7 455,560 448.3,555 445,548.3 428.3,543.3 410,535 405,523.3 396.7,518.3 388.3,518.3 378.3,509.3 363.3,505 358.3,496.7 343.3,486.7 347.3,479.3 340,476.7 332.7,466 336.7,460.7 330,455 318.3,454`;

// roughen the traced border a little so it reads as a real boundary and not as straight cuts
const roughen = (text) => {
  const pts = text.split(' ').map((p) => p.split(',').map(Number));
  const out = [];
  let seed = 7;
  const rnd = () => {
    seed = (seed * 16807) % 2147483647;
    return seed / 2147483647 - 0.5;
  };
  pts.forEach(([x, y], i) => {
    const [nx, ny] = pts[(i + 1) % pts.length];
    const len = Math.hypot(nx - x, ny - y);
    const steps = Math.max(1, Math.round(len / 3.5));
    for (let s = 0; s < steps; s += 1) {
      const t = s / steps;
      const amp = s === 0 ? 0 : 1.3;
      out.push(`${(x + (nx - x) * t + rnd() * amp).toFixed(1)},${(y + (ny - y) * t + rnd() * amp).toFixed(1)}`);
    }
  });
  return out.join(' ');
};

const Stepper = () => (
  <Spin><SpinUp /><SpinDown /></Spin>
);

export default function App() {
  return (
    <Desktop>
      <GlobalStyle />
      <Window>
        <TitleBar>
          <TitleText>*Névtelen projekt - QGIS</TitleText>
          <WinButtons>
            <WinButton>
              <svg width="10" height="10" viewBox="0 0 10 10"><path d="M1 5h8" stroke="#3c3b37" strokeWidth="1.4" /></svg>
            </WinButton>
            <WinButton>
              <svg width="10" height="10" viewBox="0 0 10 10"><rect x="1.5" y="1.5" width="7" height="7" fill="none" stroke="#3c3b37" strokeWidth="1.3" /></svg>
            </WinButton>
            <WinButton>
              <svg width="10" height="10" viewBox="0 0 10 10"><path d="M2 2l6 6M8 2l-6 6" stroke="#3c3b37" strokeWidth="1.4" /></svg>
            </WinButton>
          </WinButtons>
        </TitleBar>
        <MenuBar>
          {MENU.map(([mark, rest, w]) => (
            <MenuItem key={mark + rest} $w={w}>
              {mark && <u>{mark}</u>}
              {rest}
            </MenuItem>
          ))}
        </MenuBar>
        <Toolbars>
          <Toolbar $h={39}>
            <Grip w={12} />
            <Tool><NewIcon /></Tool>
            <Tool><OpenIcon /></Tool>
            <Tool><SaveIcon /></Tool>
            <Tool><SaveAsIcon /></Tool>
            <Tool><LayoutNewIcon /></Tool>
            <Tool><LayoutMgrIcon /></Tool>
            <Grip />
            <Tool $active><HandIcon /></Tool>
            <Tool><PanSelIcon /></Tool>
            <Tool><ZoomInIcon /></Tool>
            <Tool><ZoomOutIcon /></Tool>
            <Tool><ZoomOneIcon /></Tool>
            <Tool><ZoomFullIcon /></Tool>
            <Tool><ZoomSelIcon /></Tool>
            <Tool><ZoomLayerIcon /></Tool>
            <Tool><ZoomLastIcon /></Tool>
            <Tool><ZoomNextIcon /></Tool>
            <Tool><SheetNewIcon /></Tool>
            <Tool><SheetMarkIcon /></Tool>
            <Tool><SheetShowIcon /></Tool>
            <Tool><RefreshIcon /></Tool>
            <Grip />
            <Tool><IdentifyIcon /></Tool>
            <Tool><ActionIcon /></Tool>
            <DropArrow />
            <Tool><SelectIcon /></Tool>
            <DropArrow />
            <Tool><AttrSelIcon /></Tool>
            <DropArrow />
            <Tool><DeselectIcon /></Tool>
            <Tool><TableIcon /></Tool>
            <Tool><AbacusIcon /></Tool>
            <Tool><GearIcon /></Tool>
            <Tool><SigmaIcon /></Tool>
            <Tool><RulerIcon /></Tool>
            <DropArrow />
            <More>»</More>
          </Toolbar>
          <Toolbar $h={40}>
            <Grip w={12} />
            <Tool><AddLayersIcon /></Tool>
            <Tool><GeoPackageIcon /></Tool>
            <Tool><NewVIcon /></Tool>
            <Tool><NewFeatherIcon /></Tool>
            <Tool><ChipIcon /></Tool>
            <Grip />
            <Tool $w={41}><EditMultiIcon /><Arrow /></Tool>
            <Tool><PencilIcon /></Tool>
            <Tool><SaveEditsIcon /></Tool>
            <Tool><ShapeGearIcon /></Tool>
            <Tool><NodeToolIcon /></Tool>
            <Tool><TableEditIcon /></Tool>
            <Tool><TrashIcon /></Tool>
            <Tool><ScissorsIcon /></Tool>
            <Tool><CopyIcon /></Tool>
            <Tool><PasteIcon /></Tool>
            <Tool><UndoIcon /></Tool>
            <Tool><RedoIcon /></Tool>
            <Grip />
            <Tool><AbcIcon /></Tool>
            <Tool><DiagramIcon /></Tool>
            <Tool><PinIcon /></Tool>
            <Tool><BallTag /></Tool>
            <Tool><EyeTag /></Tool>
            <Tool><BoxTag d="M17 18.5h4V16l4 4-4 4v-2.500h-4z" /></Tool>
            <Tool><BoxTag round /></Tool>
            <Tool><BoxTag d="M17 23l1-3 5-5 2 2-5 5z" /></Tool>
            <Grip />
            <Tool><GlobeFindIcon /></Tool>
            <Grip w={13} />
            <Tool><PythonIcon /></Tool>
            <Grip w={13} />
            <Tool><HelpIcon /></Tool>
            <Grip w={13} />
            <Tool><CrossIcon /></Tool>
            <Grip w={13} />
            <Tool><WktIcon /></Tool>
          </Toolbar>
          <Grip w={12} />
        </Toolbars>
        <Main>
          <Dock>
            <DockGrip><DockDot /><DockDot /><DockDot /><DockDot /></DockGrip>
            {DOCK.map(([Icon, hasDrop], i) => (
              <DockRow key={i}>
                <Tool><Icon /></Tool>
                {hasDrop && <DropArrow />}
              </DockRow>
            ))}
          </Dock>
          <Panel>
            <PanelHead>
              <PanelTitle>Rétegek</PanelTitle>
              <PanelBtns>
                <svg width="13" height="13" viewBox="0 0 13 13"><rect x=".5" y=".5" width="12" height="12" rx="2" fill="none" stroke="#6d6c68" /><rect x="5" y="3" width="5" height="5" fill="none" stroke="#555" /><rect x="3" y="5" width="5" height="5" fill="none" stroke="#555" /></svg>
                <svg width="13" height="13" viewBox="0 0 13 13"><rect x=".5" y=".5" width="12" height="12" rx="2" fill="none" stroke="#6d6c68" /><path d="M3.500 3.500l6 6M9.500 3.500l-6 6" stroke="#333" strokeWidth="1.6" /></svg>
              </PanelBtns>
            </PanelHead>
            <PanelTools>
              <PanelTool $w={28}><BrushIcon /></PanelTool>
              <PanelTool $w={30}><LayerGroupIcon /></PanelTool>
              <PanelTool $w={32}><EyeDropIcon /></PanelTool>
              <PanelTool $w={30}><FunnelIcon /></PanelTool>
              <PanelTool $w={30}><EpsilonIcon /></PanelTool>
              <PanelTool $w={14}><Arrow /></PanelTool>
              <PanelTool $w={68}><More>»</More></PanelTool>
            </PanelTools>
            <Tree>
              {LAYERS.map(([name, color, selected]) => (
                <LayerRow key={name} $selected={selected}>
                  <Check>
                    <svg width="11" height="11" viewBox="0 0 11 11"><path d="M1.500 5l3 4L10 1" fill="none" stroke="#5a3a2a" strokeWidth="1.800" /></svg>
                  </Check>
                  <Swatch $color={color} />
                  <LayerName>{name}</LayerName>
                </LayerRow>
              ))}
            </Tree>
          </Panel>
          <Canvas>
            <MapSvg viewBox="284 157 942 518" preserveAspectRatio="xMinYMin meet">
              <polygon points={roughen(MAP_POINTS)} fill="#a37059" stroke="#3c3c3c" strokeWidth="1" strokeLinejoin="round" />
            </MapSvg>
          </Canvas>
        </Main>
        <StatusBar>
          <Search>
            <svg width="16" height="16" viewBox="0 0 16 16"><circle cx="6.500" cy="6.500" r="5" fill="none" stroke="#9a9996" strokeWidth="1.300" /><path d="M10 10l5 5" stroke="#9a9996" strokeWidth="1.500" /></svg>
            Írjon ide a kereséshez (Ctrl+K)
          </Search>
          <Clip $w={46} $ml={9}>1 jelkulcs</Clip>
          <Clip $w={4} $ml={17} $end>d</Clip>
          <Field $w={98} $ml={1}><FieldText $pad={2}>20.349,49.076</FieldText></Field>
          <StatusIcon $ml={9}><MouseIcon /></StatusIcon>
          <Clip $w={5} $ml={9}>t</Clip>
          <Field $w={106} $ml={3}>
            <FieldText $pad={1}>1:1514520</FieldText>
            <ComboButton><Arrow /></ComboButton>
          </Field>
          <StatusIcon $ml={5}>
            <svg width="14" height="18" viewBox="0 0 14 18"><path d="M3.500 8V5a3.500 3.500 0 0 1 7 0v3" fill="none" stroke="#6b6a67" strokeWidth="1.800" /><rect x="1" y="8" width="12" height="9" rx="1" fill="#6b6a67" /></svg>
          </StatusIcon>
          <Clip $w={4} $ml={13}>)</Clip>
          <Field $w={98} $ml={4}><FieldText $pad={5}>100%</FieldText><Stepper /></Field>
          <Clip $w={3} $ml={10}>!</Clip>
          <Field $w={95} $ml={10}><FieldText $pad={5}>0,0 °</FieldText><Stepper /></Field>
          <StatusIcon $ml={10}>
            <Check>
              <svg width="11" height="11" viewBox="0 0 11 11"><path d="M1.500 5l3 4L10 1" fill="none" stroke="#5a3a2a" strokeWidth="1.800" /></svg>
            </Check>
          </StatusIcon>
          <RenderLabel>Megjelenít</RenderLabel>
          <StatusIcon>
            <svg width="15" height="15" viewBox="0 0 15 15"><circle cx="7.500" cy="7.500" r="6" fill="none" stroke="#6b6a67" /><path d="M1.500 5h12M1.500 10h12M5 1.800c-2 3.500-2 8 0 11.500M10 1.800c2 3.500 2 8 0 11.500" fill="none" stroke="#6b6a67" /></svg>
          </StatusIcon>
          <Epsg>EPSG:4326</Epsg>
          <StatusIcon $ml={-6}>
            <svg width="18" height="18" viewBox="0 0 18 18"><path d="M9 1.500c4.500 0 8 2.800 8 6.500s-3.500 6.500-8 6.500c-1 0-1.500 0-2.500-.3L3 16l1-3C2 12 1 10 1 8c0-3.700 3.500-6.500 8-6.500z" fill="#4a4946" /><circle cx="5.500" cy="8" r="1.100" fill="#fff" /><circle cx="9" cy="8" r="1.100" fill="#fff" /><circle cx="12.500" cy="8" r="1.100" fill="#fff" /></svg>
          </StatusIcon>
          <StatusIcon $ml={8}>
            <svg width="24" height="24" viewBox="0 0 24 24">
              <path d="M3 10h5c-2-3 4-4 3 0h5v4c3-1 3 5 0 4v5H3v-4c2 1 2-4 0-3z" fill="#9a9996" stroke="#6b6a67" />
              <path d="M18 1l1 3 3 .5-2 2 1 3-3-1.500-3 1.500 1-3-2-2 3-.5z" fill="#fff" stroke="#888" strokeWidth=".8" />
            </svg>
          </StatusIcon>
          <Resize />
        </StatusBar>
      </Window>
    </Desktop>
  );
}
